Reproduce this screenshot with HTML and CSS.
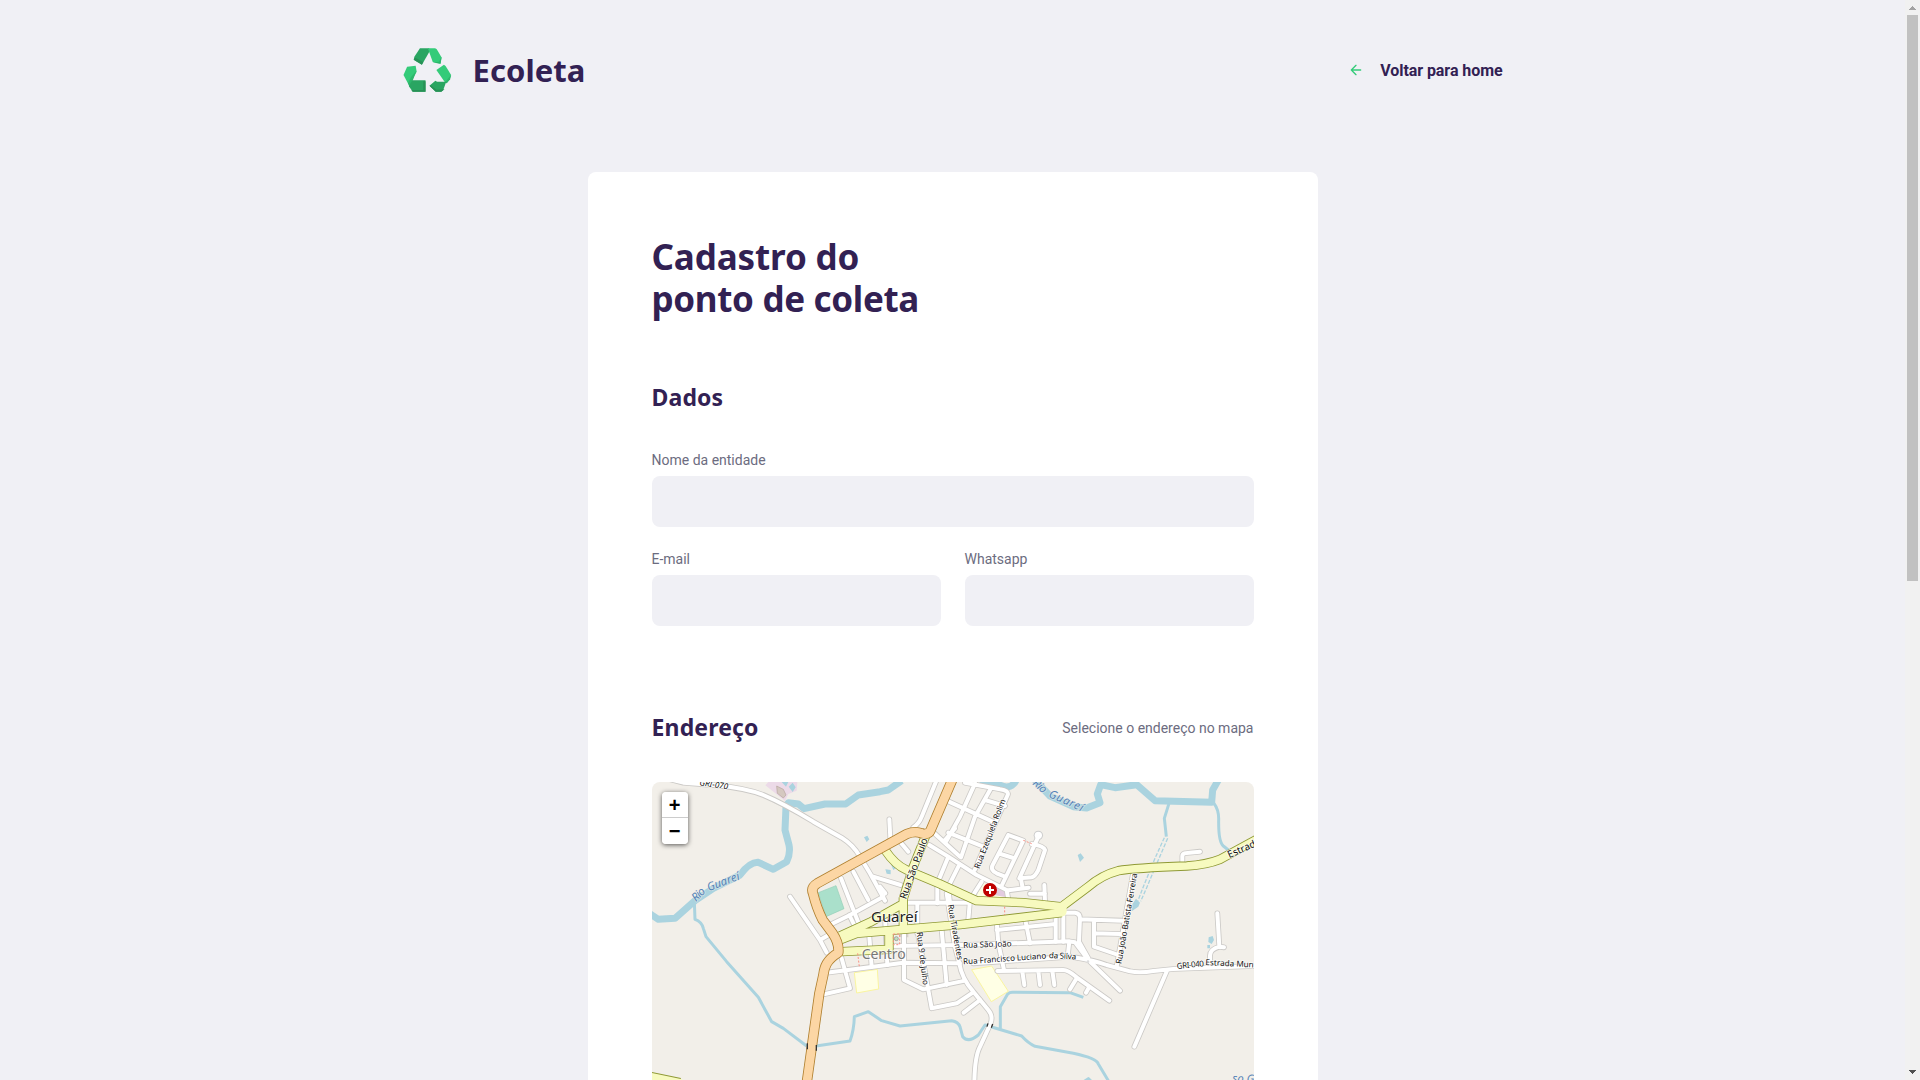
FILE: index.html
```html
<!DOCTYPE html>
<html lang="pt-BR">
<head>
<meta charset="utf-8">
<title>Ecoleta</title>
<link rel="stylesheet" href="styles.css">
</head>
<body>
<div class="page">
  <header class="header">
    <div class="brand">
      <svg class="brand-icon" viewBox="38 53 146 134">
        <path fill="#2aa562" d="M88 54h28l2 8-24 42-25-15 2-9z"/>
        <path fill="#279156" d="M69 89l5-6 24 13-4 8z"/>
        <path fill="#34cb79" d="M112 54h22q5 1 8 7l12 21-4 19-23-5z"/>
        <path fill="#2db66b" d="M154 80l-3 21-24-4 19-2z"/>
        <path fill="#34cb79" d="M138 120l23-16 5 4 17 27-5 14-8 9-6-1z"/>
        <path fill="#2db66b" d="M183 135l-3 13-10 12-7-1 12-15z"/>
        <path fill="#34cb79" d="M49 110l26-3 3 18-22 41-6-8-12-23z"/>
        <path fill="#2db66b" d="M77 123l-19 50-7-12 10-20z"/>
        <path fill="#2aa562" d="M65 151h40v35H66l-12-17z"/>
        <path fill="#279156" d="M98 154h7v32H66l-4-5h36z"/>
        <path fill="#2aa562" d="M117 168l18-15 5 3h28l-9 25-6 5h-17z"/>
        <path fill="#279156" d="M117 168l5-1 16 13 25-1-10 7h-17z"/>
      </svg>
      <span class="brand-name">Ecoleta</span>
    </div>
    <a class="back">
      <svg class="back-icon" viewBox="0 0 24 24"><path d="M19 12H5M12 19l-7-7 7-7"/></svg>
      <span>Voltar para home</span>
    </a>
  </header>

  <main class="card">
    <h1 class="title"><span class="title-a">Cadastro do</span><br><span class="title-b">ponto de coleta</span></h1>

    <section class="group">
      <div class="group-head"><h2>Dados</h2></div>
      <div class="field"><label for="name">Nome da entidade</label><input id="name" type="text"></div>
      <div class="row">
        <div class="field"><label for="email">E-mail</label><input id="email" type="text"></div>
        <div class="field"><label for="phone">Whatsapp</label><input id="phone" type="text"></div>
      </div>
    </section>

    <section class="group">
      <div class="group-head"><h2>Endereço</h2><span>Selecione o endereço no mapa</span></div>
      <div class="map">
        <svg class="map-canvas" viewBox="36 36 1806 1050">
          <defs>
            <g id="streets">
              <path d="M90 28L130 38L230 46Q320 55 370 75Q430 100 520 155L605 203Q640 225 660 260L690 310L735 392"/>
              <path d="M890 30L845 140Q838 160 820 172M748 148L751 205M780 215L805 245M450 380L540 510L560 548M540 510L580 487"/>
              <path d="M603 325L660 470M640 305L685 390M575 462L630 435L730 380M700 320L782 345M628 435L645 470M720 350L736 370M685 462L695 590M735 440L742 585"/>
              <path d="M790 398H985M832 398V490M750 528L970 525M560 608L700 590L790 578L960 580M602 555L630 655L555 672"/>
              <path d="M792 470V630L850 658L975 632M832 480L865 660L875 715L950 700L995 670M905 480L920 645"/>
              <path d="M920 370L945 530L958 580Q965 625 1000 665L1045 720Q1060 738 1052 760L1020 830Q1004 860 1003 940"/>
              <path d="M868 225L925 260L1010 315L1100 360L1106 395M878 185L960 260M1005 40L960 140L918 215M975 38L1080 58Q1108 62 1103 75L1004 300M1050 60L1005 140L963 262M920 92L1065 158M1035 90L1095 108M925 188L1030 230M945 175L915 210M925 260L892 340V400M955 290L925 350L930 400"/>
              <path d="M1105 195L1150 212L1086 345M1105 195L1058 285Q1050 300 1070 310L1095 320M1082 252L1120 264M1195 200L1138 325L1175 322Q1185 320 1195 300L1215 240Q1212 228 1175 222M1143 328L1148 354M1105 361L1166 353M1170 371H1215M1213 345L1215 395"/>
              <path d="M1025 335L990 390L985 450M1070 455L1075 520L1092 600M1155 445L1170 520M1247 435V515M1270 435V515M1070 480L1247 462M1270 428H1305Q1320 430 1320 445L1317 515M1288 515L1284 550M1320 448L1445 452M1362 452V530L1430 553M1362 490L1440 492"/>
              <path d="M970 525L1285 514L1305 517L1345 570L1440 662M1317 515L1345 565M1000 580L1290 560Q1360 570 1400 585L1470 604Q1500 610 1540 603L1600 597L1845 588M1582 600L1483 830M1480 305L1430 590"/>
              <path d="M1072 603L1270 600Q1285 600 1310 622L1408 692M1147 605L1153 645M1195 603L1200 645M1237 602L1243 645M1310 625L1290 658M1348 650L1338 668M1020 690L971 728M1627 275V258Q1627 250 1640 249L1680 245M1732 430L1738 530L1752 532M1738 530Q1708 538 1710 560V585"/>
            </g>
            <g id="avenues">
              <path d="M858 195L818 295L790 385V475M735 240Q765 285 800 300L900 342L1010 392L1150 398L1260 410M600 498L690 457L788 402M600 510L650 490L790 478L960 464L1265 428M605 545L747 538V485"/>
              <path d="M1265 410L1345 350Q1385 315 1435 302Q1480 294 1640 288Q1700 284 1740 268L1850 208M10 915L120 938"/>
            </g>
            <path id="highway" d="M940 22L873 178Q867 196 845 190Q825 182 800 192L532 340Q512 352 519 370Q530 415 548 450L578 490Q598 520 595 548C560 570 553 590 550 615L538 670L500 940"/>
          </defs>
          <rect x="36" y="36" width="1806" height="1050" fill="#f2efe9"/>
          <path fill="#ecdae8" d="M385 36L376 46L435 93L445 72L470 62L472 36z"/>
          <path fill="#d5c8c0" stroke="#b5a59d" stroke-width="2" d="M410 48L430 58L438 75L430 84L412 70z"/>
          <path fill="#aad3df" d="M425 36H445L438 50zM446 50L458 38L467 52L458 66zM672 202L682 197L688 208L680 216zM750 275L760 300L772 292L755 270zM736 298L752 300L752 313L740 311zM1313 255L1322 250L1332 263L1320 276zM1706 502L1718 498L1722 510L1715 522L1705 516zM1702 525H1710V535H1702zM1475 424L1473 408L1488 386L1500 398L1495 410z"/>
          <path class="river" d="M20 425L55 448L105 445L165 392L220 355L300 315Q330 275 355 277L400 298L440 275Q452 250 447 225L435 180L438 110L445 98L475 102L492 116L555 102L617 102L655 75L720 65L745 60L785 32M1020 30L1070 40Q1110 65 1128 32M1185 30L1230 78L1300 110L1340 114L1380 98L1372 72L1382 44L1425 53L1490 44L1545 92L1715 97L1718 60L1735 30"/>
          <g class="stream">
            <path d="M163 395L165 448Q185 455 190 475L198 500L260 575L355 682L395 755L430 775L500 828M528 828L630 813Q642 780 643 740L685 725L725 752L780 768L935 752Q955 755 960 770L968 800Q985 820 1015 795L1035 765L1145 798Q1165 820 1185 829L1300 850Q1370 865 1375 882L1405 932M1081 775V710L1103 672Q1110 666 1120 667L1290 668L1330 682M1587 100L1573 145L1579 200M1722 100Q1737 120 1736 150Q1735 215 1750 228L1765 240"/>
            <path d="M1330 936L1345 926L1360 940"/>
          </g>
          <path class="culvert" d="M1573 203L1545 265L1510 350L1494 392M1583 205L1555 270L1520 353L1502 394"/>
          <path fill="#aae0cb" stroke="#93cfb7" stroke-width="2" d="M535 368L588 347L612 416L558 440z"/>
          <path fill="#ffffe5" stroke="#faf5a0" stroke-width="3" d="M643 608L712 598L716 657L650 669zM995 599L1055 588L1105 664L1054 695z"/>
          <path fill="#ffffe5" d="M1022 335L1100 370L1094 382L1012 378z"/>
          <path fill="#e3cbe0" d="M1068 350L1100 362L1100 382L1065 376z"/>
          <path fill="#d9d0c9" d="M778 490H805V502H778zM778 540L800 545V560H778z"/>
          <use href="#streets" class="casing"/>
          <circle cx="1195" cy="196" r="14" fill="#ccc"/>
          <use href="#streets" class="road"/>
          <circle cx="1195" cy="196" r="11" fill="#fff"/>
          <use href="#avenues" class="avenue-casing"/>
          <use href="#avenues" class="avenue"/>
          <path fill="#f7fabf" d="M1255 400H1270Q1280 403 1280 412V425Q1278 438 1265 439L1240 428z"/>
          <use href="#highway" class="highway-casing"/>
          <use href="#highway" class="highway"/>
          <path d="M502 820V838M529 825V842M1044 760L1041 770M1058 762L1054 773" stroke="#333" stroke-width="4"/>
          <circle cx="1344" cy="575" r="4" fill="#ddd"/>
          <path class="footway" d="M653 550L658 590M1094 410V435M1150 211L1175 221M760 492H779V524H760z"/>
          <circle cx="769" cy="506" r="6" fill="#bfe0c0" stroke="#888" stroke-width="2"/>
          <circle cx="1050" cy="360" r="21" fill="#bf0000"/>
          <path d="M1050 348V372M1038 360H1062" stroke="#fff" stroke-width="6"/>

          <g class="water-label">
            <text transform="translate(168 396) rotate(-45)" textLength="43">Rio</text>
            <text transform="translate(206 364) rotate(-21)" textLength="102">Guareí</text>
            <text transform="translate(1176 42) rotate(42)" textLength="44">Rio</text>
            <text transform="translate(1224 80) rotate(24)" textLength="110">Guareí</text>
            <text transform="translate(1777 936) rotate(2)">so Guareí</text>
          </g>
          <g class="street-label">
            <text transform="translate(178 46) rotate(8)" textLength="86" font-style="italic">GRI-070</text>
            <text transform="translate(798 389) rotate(-70)" textLength="192" class="big">Rua São Paulo</text>
            <text transform="translate(1018 298) rotate(-69)" textLength="222">Rua Ezequiela Rolim</text>
            <text transform="translate(923 405) rotate(80)" textLength="168">Rua Tiradentes</text>
            <text transform="translate(830 487) rotate(83)" textLength="160">Rua 9 de Julho</text>
            <text transform="translate(970 534) rotate(-2)" textLength="145">Rua São João</text>
            <text transform="translate(970 583) rotate(-4)" textLength="250">Rua Francisco Luciano</text>
            <text transform="translate(1226 564) rotate(3)" textLength="82">da Silva</text>
            <text transform="translate(1444 583) rotate(-80)" textLength="276">Rua João Batista Ferreira</text>
            <text transform="translate(1611 597) rotate(-6)" textLength="82">GRI-040</text>
            <text transform="translate(1696 585) rotate(3)">Estrada Municipal</text>
            <text transform="translate(1768 265) rotate(-24)" class="big">Estrada</text>
          </g>
          <text x="693" y="456" textLength="140" class="town">Guareí</text>
          <text x="665" y="567" textLength="132" class="district">Centro</text>
        </svg>
        <div class="zoom">
          <button class="zoom-btn zoom-in" type="button">+</button>
          <button class="zoom-btn" type="button">−</button>
        </div>
      </div>
    </section>
  </main>
</div>
<div class="scroll">
  <svg viewBox="0 0 15 15"><path fill="#a3a3a3" d="M4 10h7V9h-1V8H9V7H8V6H7v1H6v1H5v1H4z"/></svg>
  <div class="thumb"></div>
  <svg class="down" viewBox="0 0 15 15"><path fill="#505050" d="M4 5h7v1h-1v1H9v1H8v1H7V8H6V7H5V6H4z"/></svg>
</div>
</body>
</html>
```
FILE: styles.css
```css
* { box-sizing: border-box; margin: 0; padding: 0; }
body {
  display: flex;
  height: 1080px;
  overflow: hidden;
  background: #f0f0f5;
  color: #6c6c80;
  font-family: Roboto, sans-serif;
  font-size: 14px;
}
.page { width: 1905px; height: 1080px; overflow: hidden; }

.header {
  width: 1100px;
  height: 140px;
  margin: 0 auto 32px;
  display: flex;
  align-items: center;
  justify-content: space-between;
}
.brand { display: flex; align-items: center; gap: 21px; }
.brand-icon { width: 49px; height: 44px; }
.brand-name, .title, .group-head h2 {
  font-family: "Noto Sans", sans-serif;
  font-weight: 700;
  color: #322153;
}
.brand-name { font-size: 31px; line-height: 40px; letter-spacing: 0.07px; }
.back {
  display: flex;
  align-items: center;
  gap: 16px;
  color: #322153;
  font-size: 16px;
  font-weight: 700;
  letter-spacing: -0.07px;
}
.back-icon {
  width: 16px;
  height: 16px;
  fill: none;
  stroke: #34cb79;
  stroke-width: 2;
  stroke-linecap: round;
  stroke-linejoin: round;
}

.card {
  width: 730px;
  margin: 0 auto;
  padding: 64px;
  background: #fff;
  border-radius: 8px;
}
.title { font-size: 35px; line-height: 42px; white-space: nowrap; }
.title-a { letter-spacing: -0.12px; }
.title-b { letter-spacing: -0.33px; }
.group { margin-top: 64px; }
.group-head {
  display: flex;
  align-items: center;
  justify-content: space-between;
  height: 28px;
  margin-bottom: 40px;
}
.group-head h2 { font-size: 23px; line-height: 28px; letter-spacing: 0.15px; padding-bottom: 2px; }
.field { flex: 1; display: flex; flex-direction: column; margin-bottom: 24px; }
.field label { height: 16px; line-height: 16px; margin-bottom: 8px; }
.field input {
  width: 100%;
  height: 51px;
  border: 0;
  border-radius: 8px;
  background: #f0f0f5;
  padding: 16px 24px;
}
.row { display: flex; gap: 24px; }

.map {
  position: relative;
  height: 350px;
  border-radius: 8px;
  overflow: hidden;
}
.map-canvas { display: block; width: 602px; height: 350px; }
.map-canvas path, .map-canvas use { stroke-linejoin: round; }
.river { fill: none; stroke: #aad3df; stroke-width: 21; }
.stream { fill: none; stroke: #aad3df; stroke-width: 9; }
.culvert { fill: none; stroke: #aad3df; stroke-width: 4; stroke-dasharray: 12 5; }
.casing { fill: none; stroke: #cbc9c6; stroke-width: 17; stroke-linecap: round; }
.road { fill: none; stroke: #fff; stroke-width: 12; stroke-linecap: round; }
.avenue-casing { fill: none; stroke: #8f9935; stroke-width: 28; }
.avenue { fill: none; stroke: #f7fabf; stroke-width: 23; stroke-linecap: round; }
.highway-casing { fill: none; stroke: #b08030; stroke-width: 31; }
.highway { fill: none; stroke: #fcd6a4; stroke-width: 26; }
.footway { fill: none; stroke: #fa8f82; stroke-width: 3; stroke-dasharray: 6 5; }
.map-canvas text {
  font-family: "Noto Sans", sans-serif;
  paint-order: stroke;
  stroke: rgba(255, 255, 255, 0.7);
  stroke-width: 5px;
  stroke-linejoin: round;
}
.water-label text { font-size: 34px; font-style: italic; fill: #5683b8; stroke: rgba(242, 239, 233, 0.5); }
.street-label text { font-size: 24.5px; fill: #111; }
.street-label text.big { font-size: 30px; }
.map-canvas .town { font-size: 45px; fill: #222; }
.map-canvas .district { font-size: 42px; fill: #777; }

.zoom {
  position: absolute;
  top: 10px;
  left: 10px;
  width: 26px;
  border-radius: 4px;
  box-shadow: 0 1px 5px rgba(0, 0, 0, 0.65);
}
.zoom-btn {
  display: block;
  width: 26px;
  height: 26px;
  border: 0;
  border-radius: 0 0 4px 4px;
  background: #fff;
  color: #000;
  font: bold 20px/26px "Liberation Sans", sans-serif;
}
.zoom-in { border-bottom: 1px solid #ccc; border-radius: 4px 4px 0 0; }

.scroll {
  width: 15px;
  height: 1080px;
  display: flex;
  flex-direction: column;
  background: #f1f1f1;
}
.scroll svg { width: 15px; height: 15px; }
.thumb { width: 11px; height: 566px; margin: 0 2px; background: #c1c1c1; }
.down { margin-top: auto; }
```
